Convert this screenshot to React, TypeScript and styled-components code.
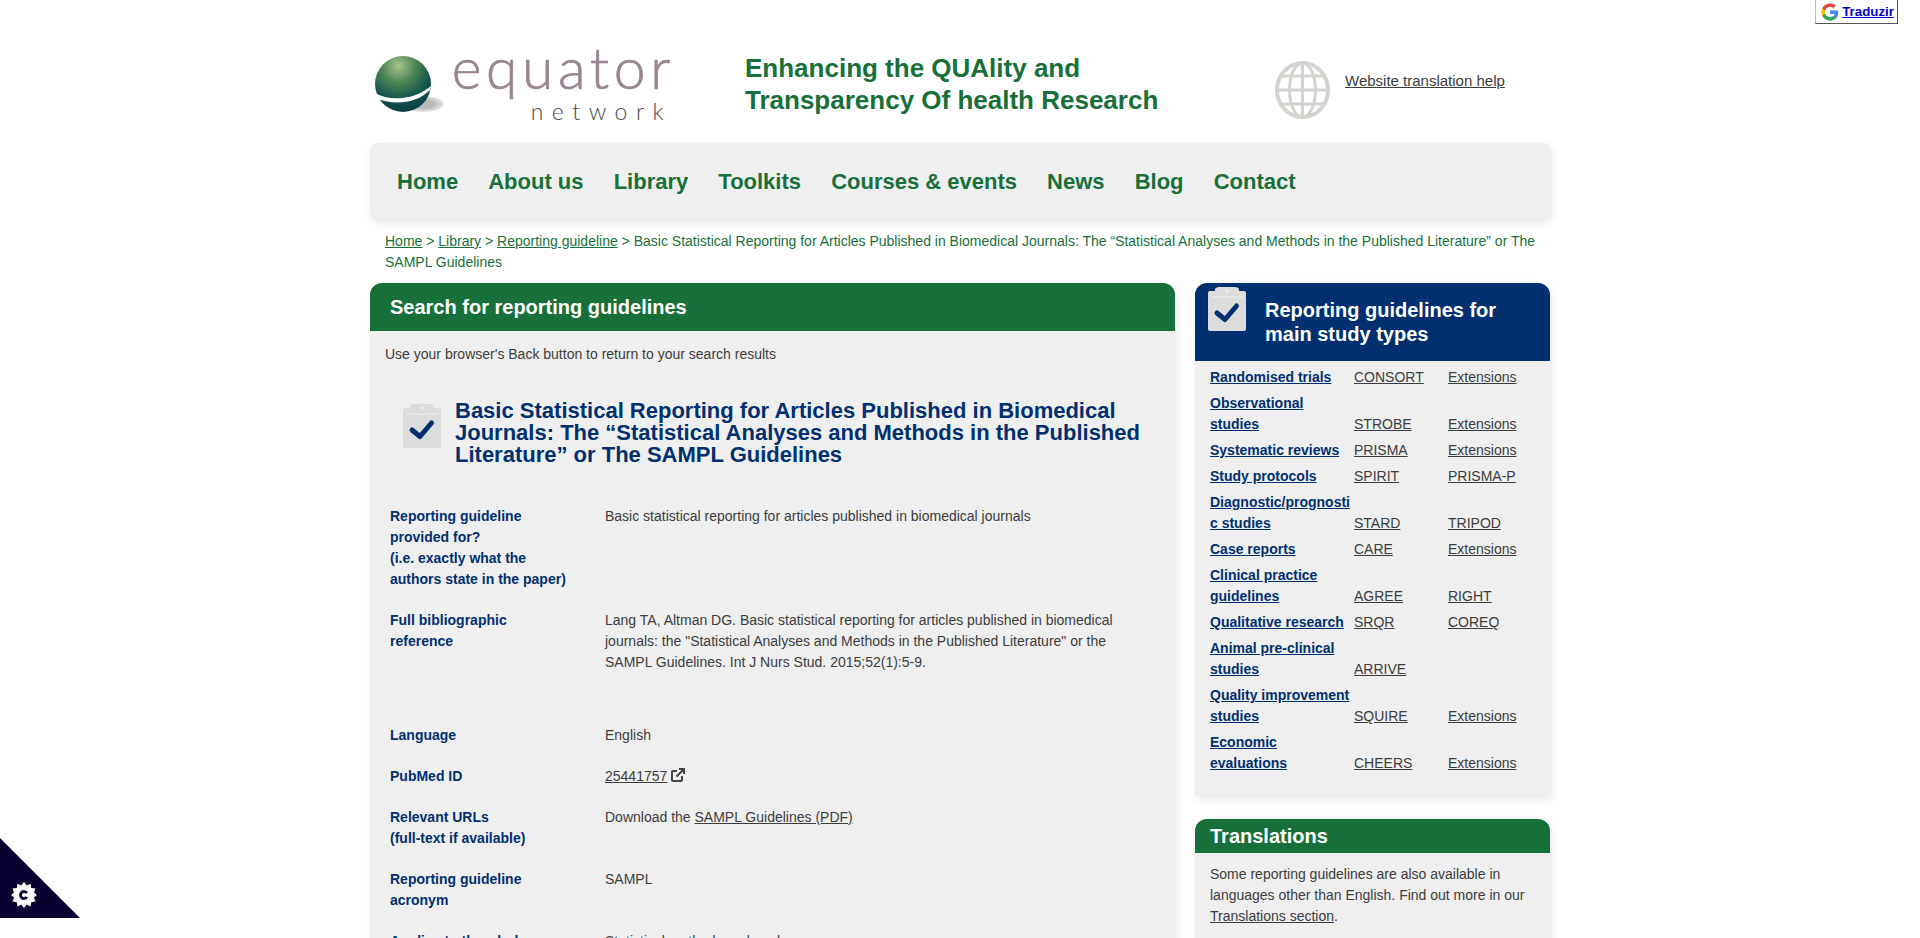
import React from 'react';
import styled, { createGlobalStyle } from 'styled-components';

const GlobalStyle = createGlobalStyle`
  html, body {
    margin: 0;
    height: 100vh;
    overflow: hidden;
    background: #fff;
    font-family: "Liberation Sans", Arial, sans-serif;
    font-size: 14px;
    line-height: 21px;
    color: #3c3c3c;
  }
  a { color: #3c3c3c; }
`;

const green = '#17703a';
const navy = '#003070';

const Page = styled.div`
  width: 1180px;
  margin: 0 auto;
`;

const Header = styled.header`
  display: flex;
  height: 143px;
`;

const Logo = styled.div`
  display: flex;
  width: 375px;
  padding-left: 3px;
  box-sizing: border-box;
`;

const LogoMark = styled.svg`
  flex: none;
  margin: 54px 0 0 0;
`;

const LogoWords = styled.div`
  display: flex;
  flex-direction: column;
  align-items: flex-end;
  margin: 42px 0 0 4px;
  width: 223px;
  font-family: Lato, sans-serif;
  font-weight: 300;
`;

const LogoName = styled.span`
  font-size: 57px;
  line-height: 50px;
  letter-spacing: 4.6px;
  color: #9a8492;
  -webkit-text-stroke: 0.7px #9a8492;
`;

const LogoSub = styled.span`
  font-size: 23px;
  line-height: 30px;
  margin-top: 4px;
  margin-right: 3px;
  letter-spacing: 8.5px;
  color: #4a4a4a;
`;

const Tagline = styled.h1`
  width: 530px;
  margin: 52px 0 0;
  font-size: 26px;
  line-height: 32px;
  font-weight: bold;
  color: ${green};
`;

const TranslateHelp = styled.div`
  display: flex;
  padding-top: 61px;
  gap: 15px;
  align-items: flex-start;
  font-size: 15px;
  a { margin-top: 9px; }
`;

const Nav = styled.nav`
  display: flex;
  align-items: center;
  gap: 30.1px;
  height: 77px;
  padding-left: 27px;
  background: #efefef;
  border-radius: 8px;
  box-shadow: 2px 3px 8px rgba(0, 0, 0, 0.1);
  font-size: 22px;
  font-weight: bold;
  color: ${green};
`;

const Breadcrumb = styled.div`
  padding: 11px 10px 10px 15px;
  color: ${green};
  a { color: ${green}; }
`;

const Columns = styled.div`
  display: flex;
  gap: 20px;
`;

const Main = styled.main`
  width: 805px;
  height: 1000px;
  background: #efefef;
  border-radius: 12px 12px 0 0;
  box-shadow: 2px 3px 8px rgba(0, 0, 0, 0.08);
`;

const MainTitle = styled.h2`
  margin: 0;
  height: 48px;
  padding-left: 20px;
  background: ${green};
  border-radius: 12px 12px 0 0;
  color: #fff;
  font-size: 20px;
  line-height: 48px;
`;

const BackHint = styled.p`
  margin: 13px 15px 0;
`;

const GuideHead = styled.div`
  display: flex;
  margin: 35px 0 0 33px;
`;

const GuideIcon = styled.div`
  flex: none;
  margin-top: 4px;
`;

const GuideTitle = styled.h3`
  width: 690px;
  margin: 0 0 0 14px;
  font-size: 22px;
  line-height: 22px;
  font-weight: bold;
  color: ${navy};
`;

const Details = styled.div`
  display: flex;
  flex-direction: column;
  gap: 20px;
  margin: 40px 0 0 20px;
`;

const Row = styled.div<{ $after?: number }>`
  display: grid;
  grid-template-columns: 215px 530px;
  padding-bottom: ${(p) => p.$after ?? 0}px;
`;

const Label = styled.div`
  width: 178px;
  font-weight: bold;
  color: ${navy};
`;

const Side = styled.aside`
  display: flex;
  flex-direction: column;
  gap: 23px;
  width: 355px;
`;

const SideCard = styled.section`
  background: #efefef;
  border-radius: 12px 12px 0 0;
  box-shadow: 2px 3px 8px rgba(0, 0, 0, 0.1);
`;

const StudyHead = styled.div`
  display: flex;
  height: 78px;
  padding: 4px 0 0 13px;
  box-sizing: border-box;
  background: ${navy};
  border-radius: 12px 12px 0 0;
  color: #fff;
  font-size: 20px;
  line-height: 24px;
  font-weight: bold;
`;

const StudyTitle = styled.div`
  margin: 11px 0 0 19px;
  width: 270px;
`;

const StudyGrid = styled.div`
  display: grid;
  grid-template-columns: 140px 90px 1fr;
  column-gap: 4px;
  row-gap: 5px;
  align-items: end;
  padding: 6px 15px 22px;
`;

const StudyName = styled.a`
  font-weight: bold;
  color: ${navy};
  overflow-wrap: anywhere;
`;

const TransHead = styled.h3`
  margin: 0;
  height: 34px;
  padding-left: 15px;
  background: ${green};
  border-radius: 12px 12px 0 0;
  color: #fff;
  font-size: 20px;
  line-height: 34px;
`;

const TransBody = styled.p`
  margin: 0;
  padding: 11px 15px 20px;
`;

const TranslateBadge = styled.div`
  position: fixed;
  top: -1px;
  right: 22px;
  display: flex;
  align-items: center;
  gap: 3px;
  height: 23px;
  padding: 0 3px 0 5px;
  background: #fff;
  border: 1px solid #bbb;
  border-right-color: #555;
  border-bottom-color: #555;
  font-size: 13.333px;
  font-weight: bold;
  a { color: #00c; }
`;

const CookieTab = styled.div`
  position: fixed;
  left: 0;
  top: 838px;
  width: 80px;
  height: 80px;
  background: #0a0030;
  clip-path: polygon(0 0, 100% 100%, 0 100%);
`;

const CookieGear = styled.svg`
  position: absolute;
  left: 11px;
  top: 44px;
`;

const Clipboard = ({ mark }: { mark: string }) => (
  <svg width="38" height="44" viewBox="0 0 38 44" style={{ flex: 'none', display: 'block' }}>
    <path
      d="M2 4h5V2.500C7 1 9 0 11 0h16c2 0 4 1 4 2.500V4h5a2 2 0 0 1 2 2v36a2 2 0 0 1-2 2H2a2 2 0 0 1-2-2V6a2 2 0 0 1 2-2z"
      fill="#dcdcdc"
    />
    <path d="M3 10h32" stroke="#eaeaea" strokeWidth="1.500" />
    <circle cx="19" cy="4" r="1.300" fill="#f2f2f2" />
    <path d="M9 26l8 6.500L28.500 19" fill="none" stroke={mark} strokeWidth="5" strokeLinecap="round" strokeLinejoin="round" />
  </svg>
);

const Globe = () => (
  <svg width="55" height="58" viewBox="0 0 55 58" fill="none" stroke="#d2d2ce" strokeWidth="3">
    <ellipse cx="27.500" cy="29" rx="25.500" ry="27" strokeWidth="4" />
    <ellipse cx="27.500" cy="29" rx="13" ry="27" />
    <path d="M27.500 2v54M2 29h51M6 15h43M6 43h43" />
  </svg>
);

const GoogleG = () => (
  <svg width="18" height="18" viewBox="0 0 48 48">
    <path fill="#4285f4" d="M46 24.500c0-1.600-.1-3.100-.4-4.500H24v9h12.400c-.5 2.900-2.200 5.300-4.600 7v5.800h7.400C43.500 37.700 46 31.700 46 24.500z" />
    <path fill="#34a853" d="M24 47c6.200 0 11.400-2 15.200-5.700l-7.400-5.800c-2 1.400-4.700 2.200-7.800 2.200-6 0-11-4-12.800-9.500H3.600v6C7.400 41.700 15.100 47 24 47z" />
    <path fill="#fbbc05" d="M11.200 28.200c-.5-1.400-.7-2.800-.7-4.200s.3-2.900.7-4.200v-6H3.600C2 16.900 1 20.300 1 24s1 7.100 2.600 10.200z" />
    <path fill="#ea4335" d="M24 10.300c3.400 0 6.400 1.200 8.800 3.400l6.600-6.600C35.400 3.400 30.200 1 24 1 15.100 1 7.400 6.300 3.600 13.800l7.600 6C13 14.300 18 10.300 24 10.300z" />
  </svg>
);

const ExternalIcon = () => (
  <svg width="14" height="14" viewBox="0 0 14 14" fill="none" stroke="#444" strokeWidth="2" style={{ marginLeft: 4, verticalAlign: -1 }}>
    <path d="M6 3H2a1 1 0 0 0-1 1v8a1 1 0 0 0 1 1h8a1 1 0 0 0 1-1V8" />
    <path d="M5.500 8.500L12 2M8 1h5v5" />
  </svg>
);

const LogoGlobe = () => (
  <LogoMark width="75" height="62" viewBox="0 0 75 62">
    <defs>
      <radialGradient id="ball" cx="0.42" cy="0.18" r="0.85">
        <stop offset="0" stopColor="#a8c48e" />
        <stop offset="0.35" stopColor="#4f8555" />
        <stop offset="0.7" stopColor="#13544e" />
        <stop offset="1" stopColor="#083a42" />
      </radialGradient>
      <radialGradient id="shade">
        <stop offset="0.5" stopColor="#b8b8b8" />
        <stop offset="1" stopColor="#e8e8e8" />
      </radialGradient>
    </defs>
    <ellipse cx="50" cy="50" rx="21" ry="8" fill="url(#shade)" />
    <circle cx="30" cy="30" r="28" fill="url(#ball)" />
    <path d="M2 39c14 8 38 8 56-7l-1 4C42 51 18 51 3 44z" fill="#fff" />
  </LogoMark>
);

const studies: [string, string, string][] = [
  ['Randomised trials', 'CONSORT', 'Extensions'],
  ['Observational studies', 'STROBE', 'Extensions'],
  ['Systematic reviews', 'PRISMA', 'Extensions'],
  ['Study protocols', 'SPIRIT', 'PRISMA-P'],
  ['Diagnostic/prognostic studies', 'STARD', 'TRIPOD'],
  ['Case reports', 'CARE', 'Extensions'],
  ['Clinical practice guidelines', 'AGREE', 'RIGHT'],
  ['Qualitative research', 'SRQR', 'COREQ'],
  ['Animal pre-clinical studies', 'ARRIVE', ''],
  ['Quality improvement studies', 'SQUIRE', 'Extensions'],
  ['Economic evaluations', 'CHEERS', 'Extensions'],
];

const navItems = ['Home', 'About us', 'Library', 'Toolkits', 'Courses & events', 'News', 'Blog', 'Contact'];

const App: React.FC = () => (
  <>
    <GlobalStyle />
    <TranslateBadge>
      <GoogleG />
      <a href="#">Traduzir</a>
    </TranslateBadge>
    <Page>
      <Header>
        <Logo>
          <LogoGlobe />
          <LogoWords>
            <LogoName>equator</LogoName>
            <LogoSub>network</LogoSub>
          </LogoWords>
        </Logo>
        <Tagline>
          Enhancing the QUAlity and
          <br />
          Transparency Of health Research
        </Tagline>
        <TranslateHelp>
          <Globe />
          <a href="#">Website translation help</a>
        </TranslateHelp>
      </Header>
      <Nav>
        {navItems.map((item) => (
          <span key={item}>{item}</span>
        ))}
      </Nav>
      <Breadcrumb>
        <a href="#">Home</a> &gt; <a href="#">Library</a> &gt; <a href="#">Reporting guideline</a> &gt; Basic Statistical
        Reporting for Articles Published in Biomedical Journals: The “Statistical Analyses and Methods in the Published
        Literature” or The SAMPL Guidelines
      </Breadcrumb>
      <Columns>
        <Main>
          <MainTitle>Search for reporting guidelines</MainTitle>
          <BackHint>Use your browser's Back button to return to your search results</BackHint>
          <GuideHead>
            <GuideIcon>
              <Clipboard mark={navy} />
            </GuideIcon>
            <GuideTitle>
              Basic Statistical Reporting for Articles Published in Biomedical Journals: The “Statistical Analyses and
              Methods in the Published Literature” or The SAMPL Guidelines
            </GuideTitle>
          </GuideHead>
          <Details>
            <Row>
              <Label>
                Reporting guideline provided for?
                <br />
                (i.e. exactly what the authors state in the paper)
              </Label>
              <div>Basic statistical reporting for articles published in biomedical journals</div>
            </Row>
            <Row $after={32}>
              <Label>Full bibliographic reference</Label>
              <div>
                Lang TA, Altman DG. Basic statistical reporting for articles published in biomedical journals: the
                "Statistical Analyses and Methods in the Published Literature" or the SAMPL Guidelines. Int J Nurs Stud.
                2015;52(1):5-9.
              </div>
            </Row>
            <Row>
              <Label>Language</Label>
              <div>English</div>
            </Row>
            <Row>
              <Label>PubMed ID</Label>
              <div>
                <a href="#">25441757</a>
                <ExternalIcon />
              </div>
            </Row>
            <Row>
              <Label>
                Relevant URLs
                <br />
                (full-text if available)
              </Label>
              <div>
                Download the <a href="#">SAMPL Guidelines (PDF)</a>
              </div>
            </Row>
            <Row>
              <Label>Reporting guideline acronym</Label>
              <div>SAMPL</div>
            </Row>
            <Row>
              <Label>Applies to the whole report or to individual sections of the report?</Label>
              <div>Statistical methods and analyses</div>
            </Row>
          </Details>
        </Main>
        <Side>
          <SideCard>
            <StudyHead>
              <Clipboard mark={navy} />
              <StudyTitle>Reporting guidelines for main study types</StudyTitle>
            </StudyHead>
            <StudyGrid>
              {studies.map(([name, main, extra]) => (
                <React.Fragment key={name}>
                  <div>
                    <StudyName href="#">{name}</StudyName>
                  </div>
                  <div>
                    <a href="#">{main}</a>
                  </div>
                  <div>{extra && <a href="#">{extra}</a>}</div>
                </React.Fragment>
              ))}
            </StudyGrid>
          </SideCard>
          <SideCard>
            <TransHead>Translations</TransHead>
            <TransBody>
              Some reporting guidelines are also available in languages other than English. Find out more in our{' '}
              <a href="#">Translations section</a>.
            </TransBody>
          </SideCard>
        </Side>
      </Columns>
    </Page>
    <CookieTab>
      <CookieGear width="26" height="26" viewBox="0 0 24 24">
        <path
          fill="#fff"
          d="M12 0l2.500 3.300L18 1.600l.7 3.900 3.900.6-1.400 3.700L24 12l-2.800 2.300 1.400 3.700-3.900.6-.7 3.900-3.500-1.700L12 24l-2.500-3.200L6 22.500l-.7-3.900-3.900-.6 1.400-3.700L0 12l2.800-2.200L1.400 6.100l3.900-.6.700-3.900 3.500 1.700z"
        />
        <path d="M14.600 10.200a3.200 3.200 0 1 0 0 3.600" fill="none" stroke="#0a0030" strokeWidth="2.600" />
      </CookieGear>
    </CookieTab>
  </>
);

export default App;
